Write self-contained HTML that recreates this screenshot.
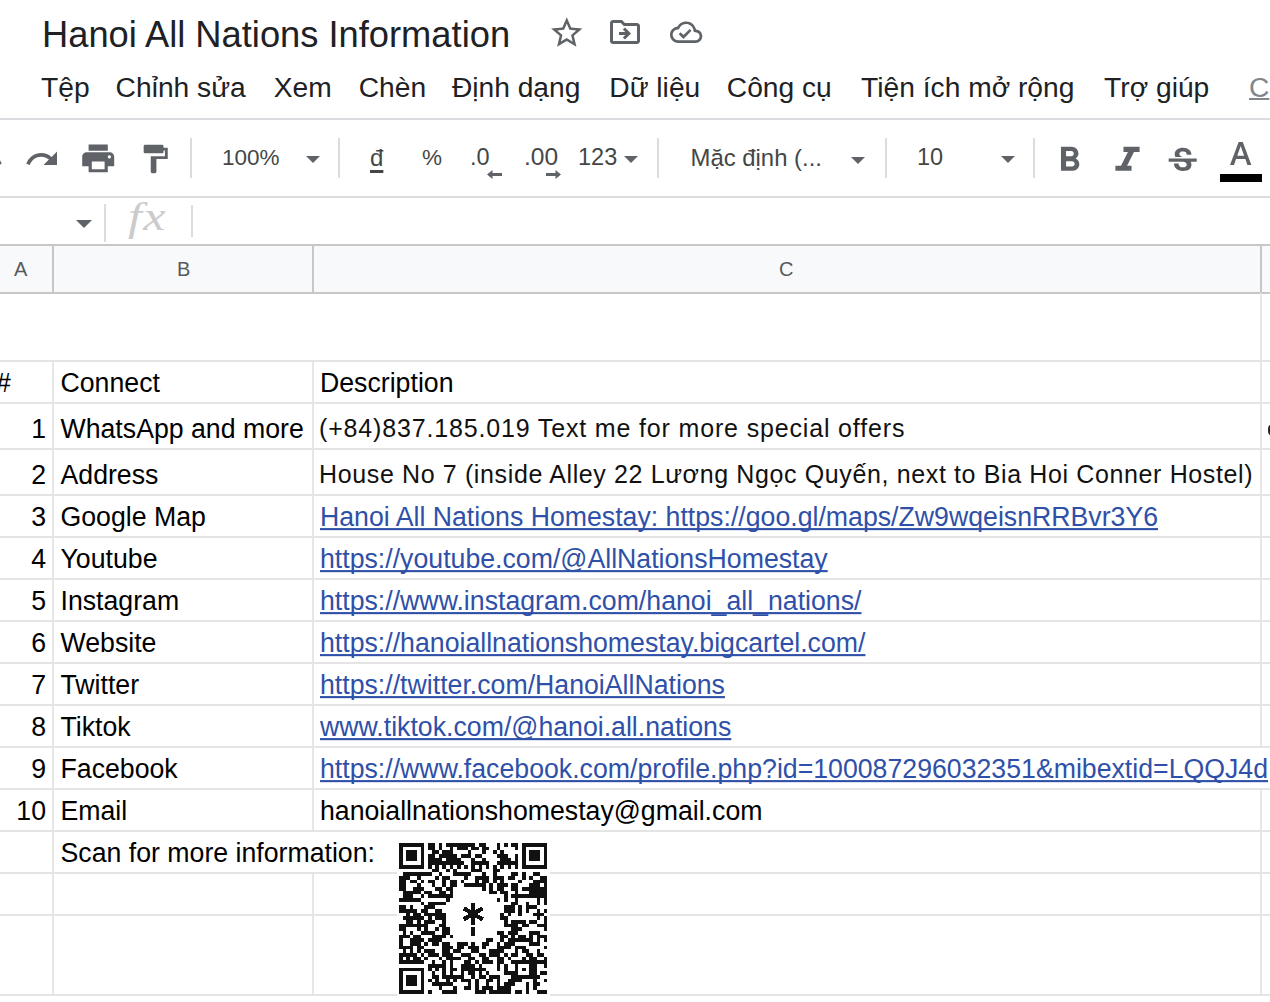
<!DOCTYPE html>
<html><head><meta charset="utf-8">
<style>
html,body{margin:0;padding:0;}
body{width:1270px;height:1002px;position:relative;overflow:hidden;background:#fff;font-family:"Liberation Sans",sans-serif;}
.t{position:absolute;line-height:1;white-space:nowrap;}
.hl{position:absolute;left:0;width:1270px;height:2px;background:#e4e4e4;}
.vl{position:absolute;width:2px;background:#e6e6e6;}
svg{position:absolute;overflow:visible;}
.menu{font-size:28.2px;color:#202124;}
.cell{font-size:26.7px;color:#000;transform:scaleY(1.05);transform-origin:0 84.67%;}
.cal{font-size:25px;color:#111;}
.lnk{color:#2f50a8;text-decoration:underline;text-decoration-thickness:2.4px;text-underline-offset:2px;text-decoration-skip-ink:none;}
.tb{color:#444746;}
.sep{position:absolute;width:2px;background:#dadce0;top:138px;height:40px;}
.tri{position:absolute;width:0;height:0;border-left:7.5px solid transparent;border-right:7.5px solid transparent;border-top:7px solid #5f6368;}
</style></head><body>
<div class="t" style="left:42px;top:16.56px;font-size:36.3px;color:#202124;">Hanoi All Nations Information</div>
<svg style="left:548px;top:14px" width="37.5" height="37.5" viewBox="0 0 24 24"><path fill="#5f6368" d="M22 9.24l-7.19-.62L12 2 9.19 8.63 2 9.24l5.46 4.73L5.82 21 12 17.27 18.18 21l-1.63-7.03L22 9.24zM12 15.4l-3.76 2.27 1-4.28-3.32-2.88 4.38-.38L12 6.1l1.71 4.04 4.38.38-3.32 2.88 1 4.28L12 15.4z"/></svg>
<svg style="left:607px;top:13.5px" width="36" height="36" viewBox="0 0 24 24"><path fill="#5f6368" d="M20 6h-8l-2-2H4c-1.1 0-1.99.9-1.99 2L2 18c0 1.1.9 2 2 2h16c1.1 0 2-.9 2-2V8c0-1.1-.9-2-2-2zm0 12H4V6h5.17l2 2H20v10zm-7.84-6H8v2h4.16l-1.59 1.59L11.99 17 16 13.01 11.99 9l-1.41 1.41L12.16 12z"/></svg>
<svg style="left:669.6px;top:16.2px" width="32.3" height="32.3" viewBox="0 0 24 24"><path fill="#5f6368" d="M19.35 10.04C18.67 6.59 15.64 4 12 4 9.11 4 6.6 5.64 5.35 8.04 2.34 8.36 0 10.91 0 14c0 3.31 2.69 6 6 6h13c2.76 0 5-2.24 5-5 0-2.64-2.05-4.78-4.65-4.96zM19 18H6c-2.21 0-4-1.79-4-4 0-2.05 1.53-3.76 3.56-3.97l1.07-.11.5-.95C8.08 7.14 9.94 6 12 6c2.62 0 4.88 1.86 5.39 4.43l.3 1.5 1.53.11c1.56.1 2.78 1.41 2.78 2.96 0 1.65-1.35 3-3 3zm-9-3.82l-2.09-2.09L6.5 13.5 10 17l6.01-6.01-1.41-1.41z"/></svg>
<div class="t menu" style="left:41.1px;top:73.12px">Tệp</div>
<div class="t menu" style="left:115.6px;top:73.12px">Chỉnh sửa</div>
<div class="t menu" style="left:273.7px;top:73.12px">Xem</div>
<div class="t menu" style="left:358.7px;top:73.12px">Chèn</div>
<div class="t menu" style="left:451.9px;top:73.12px">Định dạng</div>
<div class="t menu" style="left:609.3px;top:73.12px">Dữ liệu</div>
<div class="t menu" style="left:726.8px;top:73.12px">Công cụ</div>
<div class="t menu" style="left:861.1px;top:73.12px">Tiện ích mở rộng</div>
<div class="t menu" style="left:1104.1px;top:73.12px">Trợ giúp</div>
<div class="t menu" style="left:1249px;top:73.12px;color:#80868b;text-decoration:underline;text-decoration-thickness:2px;">C</div>
<div class="hl" style="top:118px;background:#dadce0;"></div>
<svg style="left:-32px;top:141px" width="36" height="36" viewBox="0 0 24 24"><g transform="translate(24,0) scale(-1,1)"><path fill="#5f6368" d="M18.4 10.6C16.55 8.99 14.15 8 11.5 8c-4.65 0-8.58 3.03-9.96 7.22L3.9 16c1.05-3.19 4.05-5.5 7.6-5.5 1.95 0 3.73.72 5.12 1.88L13 16h9V7l-3.6 3.6z"/></g></svg>
<svg style="left:24px;top:141px" width="36" height="36" viewBox="0 0 24 24"><path fill="#5f6368" d="M18.4 10.6C16.55 8.99 14.15 8 11.5 8c-4.65 0-8.58 3.03-9.96 7.22L3.9 16c1.05-3.19 4.05-5.5 7.6-5.5 1.95 0 3.73.72 5.12 1.88L13 16h9V7l-3.6 3.6z"/></svg>
<svg style="left:79px;top:140.4px" width="38.4" height="36.9" viewBox="0 0 24 24" preserveAspectRatio="none"><path fill="#5f6368" d="M19 8H5c-1.66 0-3 1.34-3 3v6h4v4h12v-4h4v-6c0-1.66-1.34-3-3-3zm-3 11H8v-5h8v5zm3-7c-.55 0-1-.45-1-1s.45-1 1-1 1 .45 1 1-.45 1-1 1zm-1-9H6v4h12V3z"/></svg>
<svg style="left:138px;top:142px" width="34" height="34" viewBox="0 0 24 24"><path fill="#5f6368" d="M18 4V3c0-.55-.45-1-1-1H5c-.55 0-1 .45-1 1v4c0 .55.45 1 1 1h12c.55 0 1-.45 1-1V6h1v4H9v11c0 .55.45 1 1 1h2c.55 0 1-.45 1-1v-9h8V4h-3z"/></svg>
<div class="sep" style="left:190px"></div>
<div class="t tb" style="left:222px;top:146.95px;font-size:22.5px;">100%</div>
<div class="tri" style="left:306px;top:156px"></div>
<div class="sep" style="left:338px"></div>
<div class="t tb" style="left:370px;top:145.68px;font-size:24px;text-decoration:underline;text-decoration-thickness:2.5px;text-underline-offset:3.5px;">đ</div>
<div class="t tb" style="left:422px;top:146.95px;font-size:22.5px;">%</div>
<div class="t tb" style="left:470px;top:146.1px;font-size:23.5px;">.0</div>
<div class="t tb" style="left:524px;top:145.26px;font-size:24.5px;">.00</div>
<div class="t tb" style="left:578px;top:146.1px;font-size:23.5px;">123</div>
<svg style="left:486.5px;top:170px" width="15" height="9" viewBox="0 0 15 9"><path fill="#5f6368" d="M0 4.5L5.5 0v3h9.5v3H5.5V9z"/></svg>
<svg style="left:546px;top:169.5px" width="15" height="9" viewBox="0 0 15 9"><path fill="#5f6368" d="M15 4.5L9.5 0v3H0v3h9.5V9z"/></svg>
<div class="tri" style="left:624px;top:156px"></div>
<div class="sep" style="left:657px"></div>
<div class="t tb" style="left:690.5px;top:145.76px;font-size:23.9px;">Mặc định (...</div>
<div class="tri" style="left:851px;top:156.5px"></div>
<div class="sep" style="left:885px"></div>
<div class="t tb" style="left:917px;top:146.1px;font-size:23.5px;">10</div>
<div class="tri" style="left:1001px;top:156px"></div>
<div class="sep" style="left:1033px"></div>
<svg style="left:1048.9px;top:140.2px" width="41" height="41" viewBox="0 0 24 24"><path fill="#5f6368" d="M15.6 10.79c.97-.67 1.65-1.77 1.65-2.79 0-2.26-1.75-4-4-4H7v14h7.04c2.09 0 3.71-1.7 3.71-3.79 0-1.52-.86-2.82-2.1-3.42zM10 6.5h3c.83 0 1.5.67 1.5 1.5s-.67 1.5-1.5 1.5h-3v-3zm3.5 9H10v-3h3.5c.83 0 1.5.67 1.5 1.5s-.67 1.5-1.5 1.5z"/></svg>
<svg style="left:1107px;top:140.2px" width="41" height="41" viewBox="0 0 24 24"><g transform="translate(12,0) scale(1.18,1) translate(-12,0)"><path fill="#5f6368" d="M10 4v3h2.21l-3.42 8H6v3h8v-3h-2.21l3.42-8H18V4z"/></g></svg>
<svg style="left:1164px;top:143px" width="37.4" height="37.4" viewBox="0 0 24 24"><path fill="#5f6368" d="M7.24 8.75c-.26-.48-.39-1.03-.39-1.67 0-.61.13-1.16.4-1.67.26-.5.63-.93 1.11-1.29.48-.35 1.05-.63 1.7-.83.66-.19 1.39-.29 2.18-.29.81 0 1.54.11 2.21.34.66.22 1.23.54 1.69.94.47.4.83.88 1.08 1.43.25.55.38 1.15.38 1.81h-3.01c0-.31-.05-.59-.15-.85-.09-.27-.24-.49-.44-.68-.2-.19-.45-.33-.75-.44-.3-.1-.66-.16-1.06-.16-.39 0-.74.04-1.03.13-.29.09-.53.21-.72.36-.19.16-.34.34-.44.55-.1.21-.15.43-.15.66 0 .48.25.88.74 1.21.38.25.77.48 1.41.7H7.39c-.05-.08-.11-.17-.15-.25zM21 12v-2H3v2h9.62c.18.07.4.14.55.2.37.17.66.34.87.51.21.17.35.36.43.57.07.2.11.43.11.69 0 .23-.05.45-.14.66-.09.2-.23.38-.42.53-.19.15-.42.26-.71.35-.29.08-.63.13-1.01.13-.43 0-.83-.04-1.18-.13s-.66-.23-.91-.42c-.25-.19-.45-.44-.59-.75-.14-.31-.25-.76-.25-1.21H6.4c0 .55.08 1.13.24 1.58.16.45.37.85.65 1.21.28.35.6.66.98.92.37.26.78.48 1.22.65.44.17.9.3 1.38.39.48.08.96.13 1.44.13.8 0 1.53-.09 2.18-.28s1.21-.45 1.67-.79c.46-.34.82-.77 1.07-1.27s.38-1.07.38-1.71c0-.6-.1-1.14-.31-1.61-.05-.11-.11-.23-.17-.33H21z"/></svg>
<svg style="left:1220.7px;top:137.1px" width="39.4" height="39.4" viewBox="0 0 24 24"><path fill="#5f6368" d="M5.49 17h2.42l1.27-3.58h5.65L16.09 17h2.42L13.25 3h-2.5L5.49 17zm4.42-5.61 2.03-5.79h.12l2.03 5.79H9.91z"/></svg>
<div style="position:absolute;left:1220px;top:174px;width:42px;height:8px;background:#000;"></div>
<div class="hl" style="top:196px;background:#dadce0;"></div>
<div style="position:absolute;left:76px;top:220px;width:0;height:0;border-left:8px solid transparent;border-right:8px solid transparent;border-top:8px solid #5f6368;"></div>
<div class="vl" style="left:104px;top:204px;height:38px;background:#dadce0;"></div>
<div class="t" style="left:128px;top:197px;font-size:40px;letter-spacing:1px;font-family:'Liberation Serif',serif;font-style:italic;color:#cbcbcb;transform:scaleX(1.25);transform-origin:0 0;">fx</div>
<div class="vl" style="left:191px;top:205px;height:32px;background:#dadce0;"></div>
<div style="position:absolute;left:0;top:245px;width:1270px;height:47px;background:#f8f9fa;"></div>
<div class="hl" style="top:244px;background:#c7c7c7;"></div>
<div class="hl" style="top:292px;background:#c7c7c7;"></div>
<div class="vl" style="left:52px;top:245px;height:47px;background:#c7c7c7;"></div>
<div class="vl" style="left:312px;top:245px;height:47px;background:#c7c7c7;"></div>
<div class="vl" style="left:1260px;top:245px;height:47px;background:#c7c7c7;"></div>
<div class="t" style="left:14px;top:259.07px;font-size:20px;color:#575a5e;">A</div>
<div class="t" style="left:177px;top:259.07px;font-size:20px;color:#575a5e;">B</div>
<div class="t" style="left:779px;top:259.07px;font-size:20px;color:#575a5e;">C</div>
<div class="hl" style="top:360px"></div>
<div class="hl" style="top:402px"></div>
<div class="hl" style="top:448px"></div>
<div class="hl" style="top:494px"></div>
<div class="hl" style="top:536px"></div>
<div class="hl" style="top:578px"></div>
<div class="hl" style="top:620px"></div>
<div class="hl" style="top:662px"></div>
<div class="hl" style="top:704px"></div>
<div class="hl" style="top:746px"></div>
<div class="hl" style="top:788px"></div>
<div class="hl" style="top:830px"></div>
<div class="hl" style="top:872px"></div>
<div class="hl" style="top:914px"></div>
<div class="hl" style="top:994px"></div>
<div class="vl" style="left:52px;top:362px;height:632px"></div>
<div class="vl" style="left:312px;top:362px;height:468px"></div>
<div class="vl" style="left:312px;top:874px;height:120px"></div>
<div class="vl" style="left:1260px;top:293px;height:453px"></div>
<div class="vl" style="left:1260px;top:790px;height:204px"></div>
<div class="t cell" style="left:-4px;top:370.39px">#</div>
<div class="t cell" style="left:60.5px;top:370.39px">Connect</div>
<div class="t cell" style="left:320px;top:370.39px">Description</div>
<div class="t cell" style="right:1224px;top:416.39px">1</div>
<div class="t cell" style="left:60.5px;top:416.39px">WhatsApp and more</div>
<div class="t cal" style="left:319px;top:415.83px;letter-spacing:0.84px">(+84)837.185.019 Text me for more special offers</div>
<div class="t cell" style="right:1224px;top:462.39px">2</div>
<div class="t cell" style="left:60.5px;top:462.39px">Address</div>
<div class="t cal" style="left:319px;top:461.83px;letter-spacing:0.63px">House No 7 (inside Alley 22 Lương Ngọc Quyến, next to Bia Hoi Conner Hostel)</div>
<div class="t cell" style="right:1224px;top:504.39px">3</div>
<div class="t cell" style="left:60.5px;top:504.39px">Google Map</div>
<div class="t cell lnk" style="left:320px;top:504.39px">Hanoi All Nations Homestay: https://goo.gl/maps/Zw9wqeisnRRBvr3Y6</div>
<div class="t cell" style="right:1224px;top:546.39px">4</div>
<div class="t cell" style="left:60.5px;top:546.39px">Youtube</div>
<div class="t cell lnk" style="left:320px;top:546.39px">https://youtube.com/@AllNationsHomestay</div>
<div class="t cell" style="right:1224px;top:588.39px">5</div>
<div class="t cell" style="left:60.5px;top:588.39px">Instagram</div>
<div class="t cell lnk" style="left:320px;top:588.39px">https://www.instagram.com/hanoi_all_nations/</div>
<div class="t cell" style="right:1224px;top:630.39px">6</div>
<div class="t cell" style="left:60.5px;top:630.39px">Website</div>
<div class="t cell lnk" style="left:320px;top:630.39px">https://hanoiallnationshomestay.bigcartel.com/</div>
<div class="t cell" style="right:1224px;top:672.39px">7</div>
<div class="t cell" style="left:60.5px;top:672.39px">Twitter</div>
<div class="t cell lnk" style="left:320px;top:672.39px">https://twitter.com/HanoiAllNations</div>
<div class="t cell" style="right:1224px;top:714.39px">8</div>
<div class="t cell" style="left:60.5px;top:714.39px">Tiktok</div>
<div class="t cell lnk" style="left:320px;top:714.39px">www.tiktok.com/@hanoi.all.nations</div>
<div class="t cell" style="right:1224px;top:756.39px">9</div>
<div class="t cell" style="left:60.5px;top:756.39px">Facebook</div>
<div class="t cell lnk" style="left:320px;top:756.39px">https://www.facebook.com/profile.php?id=100087296032351&mibextid=LQQJ4d</div>
<div class="t cell" style="right:1224px;top:798.39px">10</div>
<div class="t cell" style="left:60.5px;top:798.39px">Email</div>
<div class="t cell" style="left:320px;top:798.39px">hanoiallnationshomestay@gmail.com</div>
<div class="t cell" style="left:60.5px;top:840.39px">Scan for more information:</div>
<div style="position:absolute;left:1267.5px;top:425px;width:5px;height:10px;border-radius:50%;background:#2a2420"></div>
<svg style="left:399.2px;top:843.0px" width="148.4" height="150.5" viewBox="0 0 41 41" preserveAspectRatio="none" shape-rendering="crispEdges"><rect x="-0.6" y="-0.6" width="42.2" height="42.2" fill="#fff"/><g fill="#111"><rect x="0" y="0" width="7" height="1"/><rect x="8" y="0" width="2" height="1"/><rect x="11" y="0" width="1" height="1"/><rect x="13" y="0" width="8" height="1"/><rect x="22" y="0" width="2" height="1"/><rect x="27" y="0" width="1" height="1"/><rect x="29" y="0" width="1" height="1"/><rect x="31" y="0" width="2" height="1"/><rect x="34" y="0" width="7" height="1"/><rect x="0" y="1" width="1" height="1"/><rect x="6" y="1" width="1" height="1"/><rect x="8" y="1" width="2" height="1"/><rect x="11" y="1" width="1" height="1"/><rect x="14" y="1" width="1" height="1"/><rect x="16" y="1" width="3" height="1"/><rect x="20" y="1" width="2" height="1"/><rect x="23" y="1" width="2" height="1"/><rect x="27" y="1" width="1" height="1"/><rect x="32" y="1" width="1" height="1"/><rect x="34" y="1" width="1" height="1"/><rect x="40" y="1" width="1" height="1"/><rect x="0" y="2" width="1" height="1"/><rect x="2" y="2" width="3" height="1"/><rect x="6" y="2" width="1" height="1"/><rect x="9" y="2" width="2" height="1"/><rect x="12" y="2" width="3" height="1"/><rect x="19" y="2" width="1" height="1"/><rect x="23" y="2" width="1" height="1"/><rect x="26" y="2" width="1" height="1"/><rect x="28" y="2" width="1" height="1"/><rect x="34" y="2" width="1" height="1"/><rect x="36" y="2" width="3" height="1"/><rect x="40" y="2" width="1" height="1"/><rect x="0" y="3" width="1" height="1"/><rect x="2" y="3" width="3" height="1"/><rect x="6" y="3" width="1" height="1"/><rect x="8" y="3" width="2" height="1"/><rect x="11" y="3" width="5" height="1"/><rect x="17" y="3" width="3" height="1"/><rect x="21" y="3" width="2" height="1"/><rect x="27" y="3" width="3" height="1"/><rect x="32" y="3" width="1" height="1"/><rect x="34" y="3" width="1" height="1"/><rect x="36" y="3" width="3" height="1"/><rect x="40" y="3" width="1" height="1"/><rect x="0" y="4" width="1" height="1"/><rect x="2" y="4" width="3" height="1"/><rect x="6" y="4" width="1" height="1"/><rect x="8" y="4" width="4" height="1"/><rect x="13" y="4" width="4" height="1"/><rect x="20" y="4" width="1" height="1"/><rect x="23" y="4" width="1" height="1"/><rect x="28" y="4" width="3" height="1"/><rect x="32" y="4" width="1" height="1"/><rect x="34" y="4" width="1" height="1"/><rect x="36" y="4" width="3" height="1"/><rect x="40" y="4" width="1" height="1"/><rect x="0" y="5" width="1" height="1"/><rect x="6" y="5" width="1" height="1"/><rect x="8" y="5" width="10" height="1"/><rect x="20" y="5" width="5" height="1"/><rect x="27" y="5" width="6" height="1"/><rect x="34" y="5" width="1" height="1"/><rect x="40" y="5" width="1" height="1"/><rect x="0" y="6" width="7" height="1"/><rect x="8" y="6" width="1" height="1"/><rect x="10" y="6" width="1" height="1"/><rect x="12" y="6" width="1" height="1"/><rect x="14" y="6" width="1" height="1"/><rect x="16" y="6" width="1" height="1"/><rect x="18" y="6" width="1" height="1"/><rect x="20" y="6" width="1" height="1"/><rect x="22" y="6" width="1" height="1"/><rect x="24" y="6" width="1" height="1"/><rect x="26" y="6" width="1" height="1"/><rect x="28" y="6" width="1" height="1"/><rect x="30" y="6" width="1" height="1"/><rect x="32" y="6" width="1" height="1"/><rect x="34" y="6" width="7" height="1"/><rect x="9" y="7" width="2" height="1"/><rect x="13" y="7" width="1" height="1"/><rect x="15" y="7" width="1" height="1"/><rect x="20" y="7" width="3" height="1"/><rect x="26" y="7" width="2" height="1"/><rect x="1" y="8" width="8" height="1"/><rect x="11" y="8" width="1" height="1"/><rect x="15" y="8" width="5" height="1"/><rect x="23" y="8" width="1" height="1"/><rect x="26" y="8" width="1" height="1"/><rect x="31" y="8" width="2" height="1"/><rect x="34" y="8" width="1" height="1"/><rect x="37" y="8" width="2" height="1"/><rect x="0" y="9" width="3" height="1"/><rect x="5" y="9" width="1" height="1"/><rect x="10" y="9" width="1" height="1"/><rect x="12" y="9" width="2" height="1"/><rect x="18" y="9" width="1" height="1"/><rect x="21" y="9" width="4" height="1"/><rect x="26" y="9" width="3" height="1"/><rect x="30" y="9" width="2" height="1"/><rect x="34" y="9" width="1" height="1"/><rect x="36" y="9" width="1" height="1"/><rect x="39" y="9" width="2" height="1"/><rect x="0" y="10" width="2" height="1"/><rect x="3" y="10" width="2" height="1"/><rect x="6" y="10" width="1" height="1"/><rect x="8" y="10" width="2" height="1"/><rect x="12" y="10" width="1" height="1"/><rect x="14" y="10" width="2" height="1"/><rect x="17" y="10" width="1" height="1"/><rect x="21" y="10" width="1" height="1"/><rect x="23" y="10" width="2" height="1"/><rect x="26" y="10" width="1" height="1"/><rect x="28" y="10" width="1" height="1"/><rect x="33" y="10" width="1" height="1"/><rect x="37" y="10" width="4" height="1"/><rect x="0" y="11" width="2" height="1"/><rect x="5" y="11" width="1" height="1"/><rect x="9" y="11" width="1" height="1"/><rect x="12" y="11" width="1" height="1"/><rect x="14" y="11" width="2" height="1"/><rect x="18" y="11" width="6" height="1"/><rect x="25" y="11" width="1" height="1"/><rect x="27" y="11" width="3" height="1"/><rect x="31" y="11" width="2" height="1"/><rect x="36" y="11" width="3" height="1"/><rect x="40" y="11" width="1" height="1"/><rect x="0" y="12" width="2" height="1"/><rect x="4" y="12" width="3" height="1"/><rect x="10" y="12" width="2" height="1"/><rect x="13" y="12" width="2" height="1"/><rect x="23" y="12" width="1" height="1"/><rect x="25" y="12" width="1" height="1"/><rect x="27" y="12" width="2" height="1"/><rect x="31" y="12" width="2" height="1"/><rect x="34" y="12" width="7" height="1"/><rect x="1" y="13" width="5" height="1"/><rect x="7" y="13" width="2" height="1"/><rect x="11" y="13" width="2" height="1"/><rect x="14" y="13" width="1" height="1"/><rect x="25" y="13" width="2" height="1"/><rect x="28" y="13" width="2" height="1"/><rect x="32" y="13" width="1" height="1"/><rect x="36" y="13" width="5" height="1"/><rect x="1" y="14" width="3" height="1"/><rect x="6" y="14" width="1" height="1"/><rect x="8" y="14" width="7" height="1"/><rect x="29" y="14" width="1" height="1"/><rect x="31" y="14" width="10" height="1"/><rect x="0" y="15" width="6" height="1"/><rect x="13" y="15" width="1" height="1"/><rect x="27" y="15" width="1" height="1"/><rect x="29" y="15" width="1" height="1"/><rect x="32" y="15" width="1" height="1"/><rect x="38" y="15" width="1" height="1"/><rect x="40" y="15" width="1" height="1"/><rect x="6" y="16" width="1" height="1"/><rect x="8" y="16" width="5" height="1"/><rect x="31" y="16" width="2" height="1"/><rect x="35" y="16" width="1" height="1"/><rect x="38" y="16" width="1" height="1"/><rect x="40" y="16" width="1" height="1"/><rect x="0" y="17" width="2" height="1"/><rect x="3" y="17" width="1" height="1"/><rect x="7" y="17" width="3" height="1"/><rect x="29" y="17" width="3" height="1"/><rect x="33" y="17" width="1" height="1"/><rect x="35" y="17" width="3" height="1"/><rect x="0" y="18" width="5" height="1"/><rect x="6" y="18" width="2" height="1"/><rect x="10" y="18" width="2" height="1"/><rect x="29" y="18" width="3" height="1"/><rect x="33" y="18" width="1" height="1"/><rect x="35" y="18" width="1" height="1"/><rect x="38" y="18" width="1" height="1"/><rect x="40" y="18" width="1" height="1"/><rect x="2" y="19" width="1" height="1"/><rect x="4" y="19" width="2" height="1"/><rect x="7" y="19" width="6" height="1"/><rect x="28" y="19" width="1" height="1"/><rect x="30" y="19" width="1" height="1"/><rect x="33" y="19" width="1" height="1"/><rect x="37" y="19" width="3" height="1"/><rect x="1" y="20" width="6" height="1"/><rect x="8" y="20" width="1" height="1"/><rect x="10" y="20" width="3" height="1"/><rect x="28" y="20" width="2" height="1"/><rect x="38" y="20" width="1" height="1"/><rect x="40" y="20" width="1" height="1"/><rect x="2" y="21" width="2" height="1"/><rect x="5" y="21" width="1" height="1"/><rect x="7" y="21" width="3" height="1"/><rect x="12" y="21" width="1" height="1"/><rect x="29" y="21" width="1" height="1"/><rect x="31" y="21" width="4" height="1"/><rect x="36" y="21" width="2" height="1"/><rect x="40" y="21" width="1" height="1"/><rect x="0" y="22" width="8" height="1"/><rect x="11" y="22" width="2" height="1"/><rect x="29" y="22" width="4" height="1"/><rect x="34" y="22" width="2" height="1"/><rect x="38" y="22" width="3" height="1"/><rect x="0" y="23" width="2" height="1"/><rect x="5" y="23" width="1" height="1"/><rect x="7" y="23" width="1" height="1"/><rect x="10" y="23" width="1" height="1"/><rect x="12" y="23" width="2" height="1"/><rect x="31" y="23" width="3" height="1"/><rect x="40" y="23" width="1" height="1"/><rect x="1" y="24" width="1" height="1"/><rect x="3" y="24" width="1" height="1"/><rect x="6" y="24" width="4" height="1"/><rect x="12" y="24" width="2" height="1"/><rect x="27" y="24" width="2" height="1"/><rect x="30" y="24" width="3" height="1"/><rect x="36" y="24" width="3" height="1"/><rect x="0" y="25" width="3" height="1"/><rect x="4" y="25" width="2" height="1"/><rect x="9" y="25" width="4" height="1"/><rect x="14" y="25" width="1" height="1"/><rect x="28" y="25" width="2" height="1"/><rect x="31" y="25" width="1" height="1"/><rect x="33" y="25" width="2" height="1"/><rect x="36" y="25" width="1" height="1"/><rect x="38" y="25" width="3" height="1"/><rect x="0" y="26" width="1" height="1"/><rect x="3" y="26" width="4" height="1"/><rect x="8" y="26" width="4" height="1"/><rect x="24" y="26" width="2" height="1"/><rect x="28" y="26" width="1" height="1"/><rect x="30" y="26" width="7" height="1"/><rect x="38" y="26" width="1" height="1"/><rect x="40" y="26" width="1" height="1"/><rect x="0" y="27" width="1" height="1"/><rect x="3" y="27" width="3" height="1"/><rect x="7" y="27" width="1" height="1"/><rect x="9" y="27" width="2" height="1"/><rect x="12" y="27" width="2" height="1"/><rect x="16" y="27" width="3" height="1"/><rect x="20" y="27" width="1" height="1"/><rect x="23" y="27" width="2" height="1"/><rect x="27" y="27" width="1" height="1"/><rect x="29" y="27" width="3" height="1"/><rect x="36" y="27" width="3" height="1"/><rect x="0" y="28" width="4" height="1"/><rect x="5" y="28" width="2" height="1"/><rect x="12" y="28" width="3" height="1"/><rect x="16" y="28" width="2" height="1"/><rect x="19" y="28" width="3" height="1"/><rect x="23" y="28" width="1" height="1"/><rect x="27" y="28" width="4" height="1"/><rect x="32" y="28" width="3" height="1"/><rect x="40" y="28" width="1" height="1"/><rect x="1" y="29" width="1" height="1"/><rect x="3" y="29" width="1" height="1"/><rect x="5" y="29" width="1" height="1"/><rect x="7" y="29" width="3" height="1"/><rect x="12" y="29" width="2" height="1"/><rect x="15" y="29" width="2" height="1"/><rect x="20" y="29" width="2" height="1"/><rect x="25" y="29" width="4" height="1"/><rect x="32" y="29" width="1" height="1"/><rect x="34" y="29" width="2" height="1"/><rect x="38" y="29" width="1" height="1"/><rect x="0" y="30" width="5" height="1"/><rect x="6" y="30" width="1" height="1"/><rect x="8" y="30" width="3" height="1"/><rect x="12" y="30" width="3" height="1"/><rect x="17" y="30" width="3" height="1"/><rect x="22" y="30" width="2" height="1"/><rect x="25" y="30" width="3" height="1"/><rect x="29" y="30" width="1" height="1"/><rect x="31" y="30" width="2" height="1"/><rect x="35" y="30" width="2" height="1"/><rect x="38" y="30" width="2" height="1"/><rect x="0" y="31" width="1" height="1"/><rect x="2" y="31" width="1" height="1"/><rect x="4" y="31" width="2" height="1"/><rect x="7" y="31" width="1" height="1"/><rect x="11" y="31" width="1" height="1"/><rect x="13" y="31" width="4" height="1"/><rect x="19" y="31" width="2" height="1"/><rect x="23" y="31" width="2" height="1"/><rect x="27" y="31" width="2" height="1"/><rect x="30" y="31" width="1" height="1"/><rect x="34" y="31" width="1" height="1"/><rect x="36" y="31" width="2" height="1"/><rect x="40" y="31" width="1" height="1"/><rect x="0" y="32" width="7" height="1"/><rect x="9" y="32" width="1" height="1"/><rect x="12" y="32" width="1" height="1"/><rect x="14" y="32" width="1" height="1"/><rect x="18" y="32" width="2" height="1"/><rect x="21" y="32" width="1" height="1"/><rect x="23" y="32" width="3" height="1"/><rect x="27" y="32" width="2" height="1"/><rect x="31" y="32" width="10" height="1"/><rect x="8" y="33" width="5" height="1"/><rect x="14" y="33" width="1" height="1"/><rect x="17" y="33" width="4" height="1"/><rect x="22" y="33" width="1" height="1"/><rect x="27" y="33" width="1" height="1"/><rect x="29" y="33" width="1" height="1"/><rect x="32" y="33" width="1" height="1"/><rect x="36" y="33" width="2" height="1"/><rect x="40" y="33" width="1" height="1"/><rect x="0" y="34" width="7" height="1"/><rect x="8" y="34" width="1" height="1"/><rect x="10" y="34" width="1" height="1"/><rect x="12" y="34" width="1" height="1"/><rect x="14" y="34" width="2" height="1"/><rect x="17" y="34" width="7" height="1"/><rect x="27" y="34" width="1" height="1"/><rect x="29" y="34" width="1" height="1"/><rect x="32" y="34" width="1" height="1"/><rect x="34" y="34" width="1" height="1"/><rect x="36" y="34" width="2" height="1"/><rect x="0" y="35" width="1" height="1"/><rect x="6" y="35" width="1" height="1"/><rect x="9" y="35" width="1" height="1"/><rect x="12" y="35" width="1" height="1"/><rect x="14" y="35" width="1" height="1"/><rect x="17" y="35" width="1" height="1"/><rect x="19" y="35" width="2" height="1"/><rect x="22" y="35" width="1" height="1"/><rect x="24" y="35" width="1" height="1"/><rect x="29" y="35" width="4" height="1"/><rect x="36" y="35" width="2" height="1"/><rect x="39" y="35" width="2" height="1"/><rect x="0" y="36" width="1" height="1"/><rect x="2" y="36" width="3" height="1"/><rect x="6" y="36" width="1" height="1"/><rect x="9" y="36" width="2" height="1"/><rect x="12" y="36" width="6" height="1"/><rect x="20" y="36" width="1" height="1"/><rect x="22" y="36" width="2" height="1"/><rect x="25" y="36" width="3" height="1"/><rect x="31" y="36" width="8" height="1"/><rect x="0" y="37" width="1" height="1"/><rect x="2" y="37" width="3" height="1"/><rect x="6" y="37" width="1" height="1"/><rect x="8" y="37" width="1" height="1"/><rect x="10" y="37" width="1" height="1"/><rect x="13" y="37" width="1" height="1"/><rect x="15" y="37" width="1" height="1"/><rect x="17" y="37" width="3" height="1"/><rect x="21" y="37" width="1" height="1"/><rect x="24" y="37" width="2" height="1"/><rect x="27" y="37" width="1" height="1"/><rect x="30" y="37" width="4" height="1"/><rect x="37" y="37" width="1" height="1"/><rect x="40" y="37" width="1" height="1"/><rect x="0" y="38" width="1" height="1"/><rect x="2" y="38" width="3" height="1"/><rect x="6" y="38" width="1" height="1"/><rect x="9" y="38" width="6" height="1"/><rect x="19" y="38" width="1" height="1"/><rect x="21" y="38" width="1" height="1"/><rect x="24" y="38" width="1" height="1"/><rect x="27" y="38" width="1" height="1"/><rect x="29" y="38" width="3" height="1"/><rect x="35" y="38" width="1" height="1"/><rect x="37" y="38" width="2" height="1"/><rect x="0" y="39" width="1" height="1"/><rect x="6" y="39" width="1" height="1"/><rect x="11" y="39" width="1" height="1"/><rect x="15" y="39" width="1" height="1"/><rect x="18" y="39" width="2" height="1"/><rect x="21" y="39" width="1" height="1"/><rect x="23" y="39" width="3" height="1"/><rect x="27" y="39" width="4" height="1"/><rect x="35" y="39" width="1" height="1"/><rect x="37" y="39" width="1" height="1"/><rect x="0" y="40" width="7" height="1"/><rect x="8" y="40" width="1" height="1"/><rect x="12" y="40" width="4" height="1"/><rect x="21" y="40" width="3" height="1"/><rect x="25" y="40" width="6" height="1"/><rect x="32" y="40" width="2" height="1"/><rect x="35" y="40" width="1" height="1"/><rect x="38" y="40" width="3" height="1"/></g><g stroke="#111" stroke-width="1.15" stroke-linecap="butt"><line x1="20.50" y1="16.30" x2="20.50" y2="22.30"/><line x1="17.90" y1="17.80" x2="23.10" y2="20.80"/><line x1="17.90" y1="20.80" x2="23.10" y2="17.80"/></g><rect x="19.95" y="23.00" width="1.1" height="2.3" fill="#111"/></svg>
</body></html>
